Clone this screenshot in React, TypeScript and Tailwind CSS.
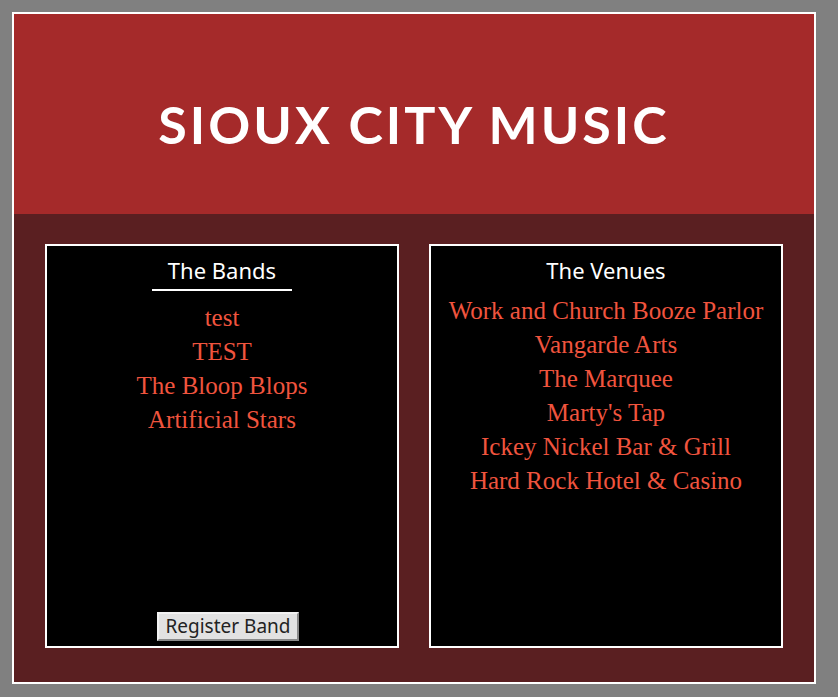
export default function App() {
  const bands = ['test', 'TEST', 'The Bloop Blops', 'Artificial Stars']
  const venues = [
    'Work and Church Booze Parlor',
    'Vangarde Arts',
    'The Marquee',
    "Marty's Tap",
    'Ickey Nickel Bar & Grill',
    'Hard Rock Hotel & Casino',
  ]

  return (
    <div className="min-h-[697px] w-full bg-[#808080] pt-[12px] pl-[12px]">
      <div className="w-[804px] h-[672px] border-2 border-white flex flex-col">
        <header className="h-[200px] bg-[#a52a2a] flex items-center justify-center">
          <h1 className="text-white text-[52px] font-bold tracking-[3px] font-['Lato',sans-serif] leading-none pt-[20px]">
            SIOUX CITY MUSIC
          </h1>
        </header>
        <main className="flex-1 bg-[#5a1f21] flex gap-[30px] pl-[31px] pt-[30px] pb-[34px]">
          <section className="w-[354px] border-2 border-white bg-black flex flex-col items-center">
            <h2 className="mt-[11px] text-white text-[22px] leading-[26px] font-['Noto_Sans',sans-serif] border-b-2 border-white w-[140px] text-center pb-[6px]">
              The Bands
            </h2>
            <ul className="mt-[10px] flex flex-col items-center">
              {bands.map((b) => (
                <li key={b} className="text-[25px] leading-[34px] text-[#f0543e] font-['Liberation_Serif',serif]">
                  {b}
                </li>
              ))}
            </ul>
            <button className="mt-auto mb-[5px] ml-[12px] h-[29px] px-[6px] bg-[#e2e2e2] text-[#222] text-[19px] leading-none font-['Noto_Sans',sans-serif] border-2 border-t-[#f2f2f2] border-l-[#f2f2f2] border-r-[#8a8a8a] border-b-[#8a8a8a]">
              Register Band
            </button>
          </section>
          <section className="w-[354px] border-2 border-white bg-black flex flex-col items-center">
            <h2 className="mt-[11px] text-white text-[22px] leading-[26px] font-['Noto_Sans',sans-serif]">
              The Venues
            </h2>
            <ul className="mt-[11px] flex flex-col items-center">
              {venues.map((v) => (
                <li key={v} className="text-[25px] leading-[34px] text-[#f0543e] font-['Liberation_Serif',serif]">
                  {v}
                </li>
              ))}
            </ul>
          </section>
        </main>
      </div>
    </div>
  )
}
